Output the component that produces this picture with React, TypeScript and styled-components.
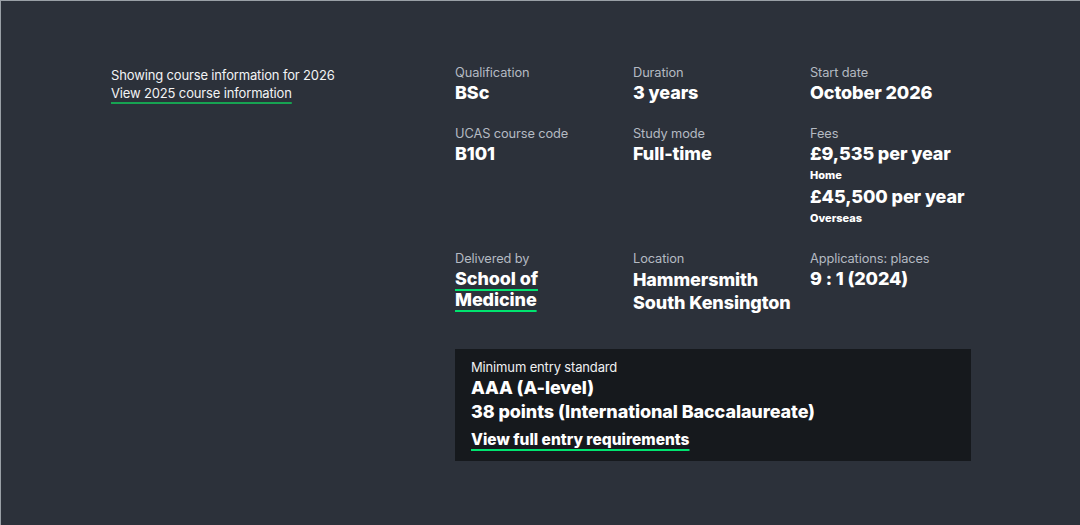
import { createGlobalStyle } from "styled-components";
import styled from "styled-components";

const GlobalStyle = createGlobalStyle`
  html, body {
    margin: 0;
    padding: 0;
    background: #2c313a;
  }
  body {
    font-family: Inter, "Noto Sans", Arial, sans-serif;
    color: #ffffff;
  }
`;

const Page = styled.div`
  box-sizing: border-box;
  width: 1080px;
  height: 525px;
  background: #2c313a;
  border-top: 1px solid #9aa0a6;
  border-left: 1px solid #9aa0a6;
  display: flex;
  padding: 63px 0 0 110px;
`;

const Intro = styled.div`
  width: 344px;
  padding-top: 2px;
  font-size: 13px;
  line-height: 18px;
  color: #f2f3f5;
  letter-spacing: -0.15px;
`;

const YearLink = styled.a`
  color: #f2f3f5;
  text-decoration: underline;
  text-decoration-color: #17a352;
  text-decoration-thickness: 2px;
  text-underline-offset: 4px;
`;

const Main = styled.div`
  display: flex;
  flex-direction: column;
  width: 516px;
`;

const Grid = styled.dl`
  display: grid;
  grid-template-columns: 178px 177px 161px;
  row-gap: 21px;
  margin: 0;
`;

const Item = styled.div`
  display: flex;
  flex-direction: column;
`;

const Label = styled.dt`
  font-size: 12.8px;
  line-height: 18px;
  color: #b4bac2;
  letter-spacing: -0.1px;
`;

const Value = styled.dd<{ $lh?: number }>`
  margin: 0;
  font-size: 18px;
  font-weight: 800;
  line-height: ${(p) => p.$lh ?? 22}px;
  color: #ffffff;
  letter-spacing: -0.1px;
`;

const Note = styled.dd`
  margin: 0;
  font-size: 11px;
  font-weight: 800;
  line-height: 21px;
  color: #ffffff;
`;

const BoldLink = styled.a`
  display: inline-block;
  max-width: 100px;
  color: #ffffff;
  text-decoration: underline;
  text-decoration-color: #00e46f;
  text-decoration-thickness: 2px;
  text-underline-offset: 4px;
`;

const EntryBox = styled.div`
  margin-top: 35px;
  background: #16191d;
  padding: 9px 16px 10px;
  display: flex;
  flex-direction: column;
`;

const EntryLabel = styled.div`
  font-size: 13px;
  line-height: 18px;
  color: #eef0f2;
  letter-spacing: -0.15px;
`;

const EntryValue = styled.div`
  font-size: 18px;
  font-weight: 800;
  line-height: 24px;
  letter-spacing: -0.1px;
`;

const EntryLink = styled.a`
  margin-top: 5px;
  font-size: 15.5px;
  font-weight: 800;
  line-height: 22px;
  color: #ffffff;
  letter-spacing: 0;
  text-decoration: underline;
  text-decoration-color: #00e46f;
  text-decoration-thickness: 2px;
  text-underline-offset: 4px;
  text-decoration-skip-ink: auto;
`;

export default function App() {
  return (
    <>
      <GlobalStyle />
      <Page>
        <Intro>
          Showing course information for 2026
          <br />
          <YearLink href="#">View 2025 course information</YearLink>
        </Intro>
        <Main>
          <Grid>
            <Item>
              <Label>Qualification</Label>
              <Value>BSc</Value>
            </Item>
            <Item>
              <Label>Duration</Label>
              <Value>3 years</Value>
            </Item>
            <Item>
              <Label>Start date</Label>
              <Value>October 2026</Value>
            </Item>
            <Item>
              <Label>UCAS course code</Label>
              <Value>B101</Value>
            </Item>
            <Item>
              <Label>Study mode</Label>
              <Value>Full-time</Value>
            </Item>
            <Item>
              <Label>Fees</Label>
              <Value>£9,535 per year</Value>
              <Note>Home</Note>
              <Value>£45,500 per year</Value>
              <Note>Overseas</Note>
            </Item>
            <Item>
              <Label>Delivered by</Label>
              <Value $lh={21}>
                <BoldLink href="#">School of Medicine</BoldLink>
              </Value>
            </Item>
            <Item>
              <Label>Location</Label>
              <Value $lh={23}>Hammersmith</Value>
              <Value $lh={23}>South Kensington</Value>
            </Item>
            <Item>
              <Label>Applications: places</Label>
              <Value>9 : 1 (2024)</Value>
            </Item>
          </Grid>
          <EntryBox>
            <EntryLabel>Minimum entry standard</EntryLabel>
            <EntryValue>AAA (A-level)</EntryValue>
            <EntryValue>38 points (International Baccalaureate)</EntryValue>
            <EntryLink href="#">View full entry requirements</EntryLink>
          </EntryBox>
        </Main>
      </Page>
    </>
  );
}
